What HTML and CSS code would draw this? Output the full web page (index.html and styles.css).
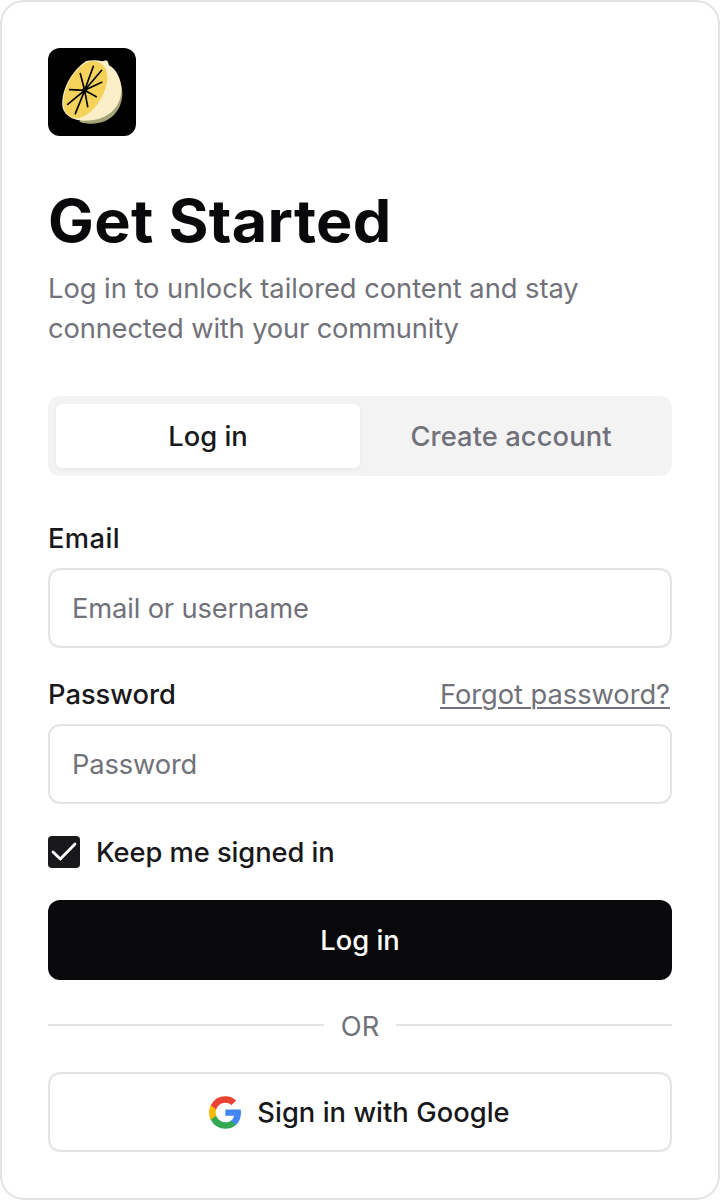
FILE: index.html
```html
<!DOCTYPE html>
<html lang="en">
<head>
<meta charset="utf-8">
<title>Get Started</title>
<link rel="stylesheet" href="styles.css">
</head>
<body>
<main class="card">
  <svg class="logo" viewBox="24 24 264 264" aria-hidden="true">
    <rect x="24" y="24" width="264" height="264" rx="36" fill="#000"/>
    <path d="M207 84C232 98 247 128 247 160C247 207 214 250 159 251C142 251 129 249 118 245Z" fill="#a5a477"/>
    <path d="M139 63C153 60 171 60 188 64L193 62Q200 59 204 66L207 76C230 87 244 119 244 151C243 199 208 234 160 240C137 243 117 243 103 237C84 230 72 218 68 203C61 157 92 93 139 63Z" fill="#faefc8"/>
    <path d="M148 65C178 60 200 76 202 110C203 158 162 221 121 233C95 239 76 225 71 201C64 153 101 80 148 65Z" fill="#f5d35b"/>
    <g stroke="#000" stroke-width="5" stroke-linecap="round">
      <path d="M134 151L160 79M134 151L185 91M134 151L185 127M134 151L169 170M134 151L143 200M134 151L106 221M134 151L83 193M134 151L89 149M134 151L121 101"/>
      <circle cx="134" cy="151" r="5"/>
    </g>
  </svg>

  <header class="intro">
    <h1 class="title">Get Started</h1>
    <p class="subtitle">Log in to unlock tailored content and stay<br><span class="line-two">connected with your community</span></p>
  </header>

  <div class="tabs" role="tablist">
    <button class="tab tab-active" type="button" role="tab">Log in</button>
    <button class="tab tab-create" type="button" role="tab">Create account</button>
  </div>

  <form class="form">
    <div class="field">
      <div class="label-row"><span class="label label-email">Email</span></div>
      <div class="input">Email or username</div>
    </div>
    <div class="field">
      <div class="label-row">
        <span class="label">Password</span>
        <a class="forgot">Forgot password?</a>
      </div>
      <div class="input">Password</div>
    </div>
    <div class="keep">
      <svg class="checkbox" viewBox="0 0 32 32" aria-hidden="true">
        <rect width="32" height="32" rx="4" fill="#18181b"/>
        <path d="M5 16L12.3 23L27 8" fill="none" stroke="#fff" stroke-width="2.8" stroke-linecap="round" stroke-linejoin="round"/>
      </svg>
      <span class="label keep-label">Keep me signed in</span>
    </div>
    <button class="submit" type="button">Log in</button>
    <div class="divider"><span class="rule"></span><span class="or">OR</span><span class="rule"></span></div>
    <button class="google" type="button">
      <svg class="google-icon" viewBox="0 0 17.64 18" aria-hidden="true">
        <path fill="#4285f4" d="M17.64 9.2c0-.64-.06-1.25-.16-1.84H9v3.48h4.84a4.14 4.14 0 0 1-1.8 2.72v2.26h2.92c1.7-1.57 2.68-3.88 2.68-6.62z"/>
        <path fill="#34a853" d="M9 18c2.43 0 4.47-.8 5.96-2.18l-2.92-2.26c-.8.54-1.84.86-3.04.86-2.34 0-4.33-1.58-5.04-3.71H.96v2.33A9 9 0 0 0 9 18z"/>
        <path fill="#fbbc05" d="M3.96 10.71A5.4 5.4 0 0 1 3.68 9c0-.59.1-1.17.28-1.71V4.96H.96A9 9 0 0 0 0 9c0 1.45.35 2.83.96 4.04l3-2.33z"/>
        <path fill="#ea4335" d="M9 3.58c1.32 0 2.51.45 3.44 1.35l2.58-2.59A8.66 8.66 0 0 0 9 0 9 9 0 0 0 .96 4.96l3 2.33C4.67 5.16 6.66 3.58 9 3.58z"/>
      </svg>
      <span class="google-label">Sign in with Google</span>
    </button>
  </form>
</main>
</body>
</html>
```
FILE: styles.css
```css
* { box-sizing: border-box; }

body {
  margin: 0;
  background: #fff;
  font-family: Inter, "Liberation Sans", sans-serif;
  font-size: 27.3px;
  line-height: 40px;
  color: #18181b;
  white-space: nowrap;
}

button {
  font: inherit;
  color: inherit;
  margin: 0;
  padding: 2px 0 0;
  border: 0;
  background: none;
}

.card {
  width: 720px;
  height: 1200px;
  padding: 46px;
  border: 2px solid #e4e4e7;
  border-radius: 24px;
  display: flex;
  flex-direction: column;
}

.logo { display: block; width: 88px; height: 88px; }

.intro { margin-top: 49px; }

.title {
  width: max-content;
  margin: 0;
  font-size: 58.5px;
  line-height: 72px;
  font-weight: 700;
  letter-spacing: 0.3px;
  color: #09090b;
  transform: scaleX(1.045);
  transform-origin: left;
}

.subtitle { margin: 12px 0 0; color: #71717a; letter-spacing: -0.03px; }

.line-two { letter-spacing: -0.15px; }

.tabs {
  display: grid;
  grid-template-columns: 1fr 1fr;
  margin-top: 47px;
  height: 80px;
  padding: 8px;
  border-radius: 12px;
  background: #f3f3f3;
}

.tab { border-radius: 6px; font-weight: 500; color: #71717a; }

.tab-create { padding-right: 2px; letter-spacing: 0.1px; }

.tab-active {
  background: #fff;
  color: #18181b;
  box-shadow: 0 2px 4px rgba(0, 0, 0, 0.05);
}

.form { display: flex; flex-direction: column; margin-top: 42px; }

.field { margin-bottom: 26px; }

.label-row {
  display: flex;
  justify-content: space-between;
  height: 50px;
  padding: 1px 2px 0 0;
}

.label { font-weight: 500; }

.label-email { letter-spacing: 0.4px; }

.forgot {
  color: #71717a;
  letter-spacing: -0.05px;
  text-decoration: underline;
  text-decoration-thickness: 1.5px;
  text-underline-offset: 3px;
}

.input {
  display: flex;
  align-items: center;
  height: 80px;
  padding: 2px 22px 0;
  border: 2px solid #e4e4e4;
  border-radius: 12px;
  color: #71717a;
  letter-spacing: -0.15px;
}

.keep { display: flex; align-items: center; gap: 16px; height: 40px; margin-top: 2px; }

.keep-label { padding-top: 2px; letter-spacing: -0.07px; }

.checkbox { width: 32px; height: 32px; }

.submit {
  height: 80px;
  margin-top: 28px;
  border-radius: 12px;
  background: #09090b;
  color: #fff;
  font-weight: 500;
}

.divider {
  display: flex;
  align-items: center;
  gap: 16px;
  height: 40px;
  margin: 25px 0 27px;
  color: #71717a;
}

.or { width: 40px; padding-top: 4px; text-align: center; }

.rule { flex: 1; height: 2px; background: #e4e4e4; }

.google {
  display: flex;
  align-items: center;
  justify-content: center;
  gap: 16px;
  height: 80px;
  padding: 0 1px 0 0;
  border: 2px solid #e4e4e4;
  border-radius: 12px;
  font-weight: 500;
}

.google-icon { width: 32px; height: 33px; }

.google-label { padding-top: 2px; letter-spacing: 0.05px; }
```
